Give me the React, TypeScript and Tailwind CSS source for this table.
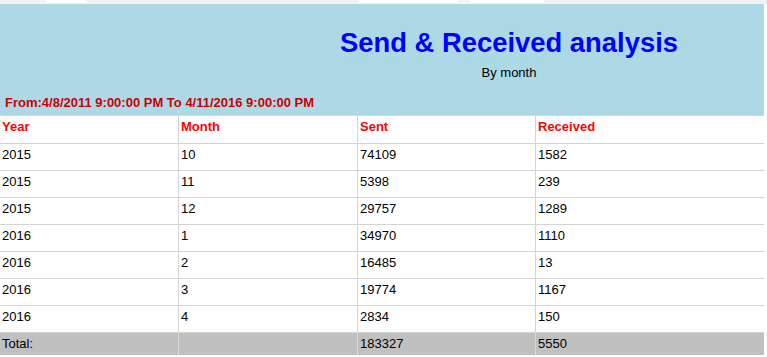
const rows = [
  { year: "2015", month: "10", sent: "74109", received: "1582" },
  { year: "2015", month: "11", sent: "5398", received: "239" },
  { year: "2015", month: "12", sent: "29757", received: "1289" },
  { year: "2016", month: "1", sent: "34970", received: "1110" },
  { year: "2016", month: "2", sent: "16485", received: "13" },
  { year: "2016", month: "3", sent: "19774", received: "1167" },
  { year: "2016", month: "4", sent: "2834", received: "150" },
];

const cols = "grid grid-cols-[178px_179px_178px_229px]";
const cell = "pl-[2px] pt-[3px] leading-[16px] border-l border-[#d4d4d4] first:border-l-0";

export default function App() {
  return (
    <div className="min-h-screen bg-white font-['Liberation_Sans',Arial,sans-serif] text-[13px] text-black">
      {/* toolbar remnant */}
      <div className="flex h-[4px] bg-[#f2f2f2]">
        <div className="ml-[46px] h-[3px] w-[40px] bg-white" />
        <div className="ml-[273px] h-[3px] w-[99px] bg-white" />
        <div className="ml-[12px] h-[3px] w-[74px] bg-white" />
      </div>

      <div className="w-[764px]">
        <div className="bg-[#add8e6] pt-[23px] pb-[4px]">
          <div className="pl-[254px] text-center">
            <h1 className="text-[27.4px] font-bold leading-[31px] text-[#0000ff]">Send &amp; Received analysis</h1>
            <p className="mt-[7px] leading-[16px]">By month</p>
          </div>
          <p className="mt-[14px] pl-[5px] text-[13px] font-bold leading-[16px] text-[#cc0000]">
            From:4/8/2011 9:00:00 PM To 4/11/2016 9:00:00 PM
          </p>
        </div>

        <div className="border-t border-[#cfd8dc]">
          <div className={`${cols} h-[28px] border-b border-[#d4d4d4] font-bold text-[#ff0000]`}>
            <div className={cell}>Year</div>
            <div className={cell}>Month</div>
            <div className={cell}>Sent</div>
            <div className={cell}>Received</div>
          </div>
          {rows.map((r, i) => (
            <div key={i} className={`${cols} h-[27px] border-b border-[#d4d4d4]`}>
              <div className={cell}>{r.year}</div>
              <div className={cell}>{r.month}</div>
              <div className={cell}>{r.sent}</div>
              <div className={cell}>{r.received}</div>
            </div>
          ))}
          <div className={`${cols} h-[22px] bg-[#c0c0c0]`}>
            <div className="pl-[2px] pt-[3px] leading-[16px]">Total:</div>
            <div className="border-l border-[#dadada]" />
            <div className="border-l border-[#dadada] pl-[2px] pt-[3px] leading-[16px]">183327</div>
            <div className="border-l border-[#dadada] pl-[2px] pt-[3px] leading-[16px]">5550</div>
          </div>
        </div>
      </div>
    </div>
  );
}
